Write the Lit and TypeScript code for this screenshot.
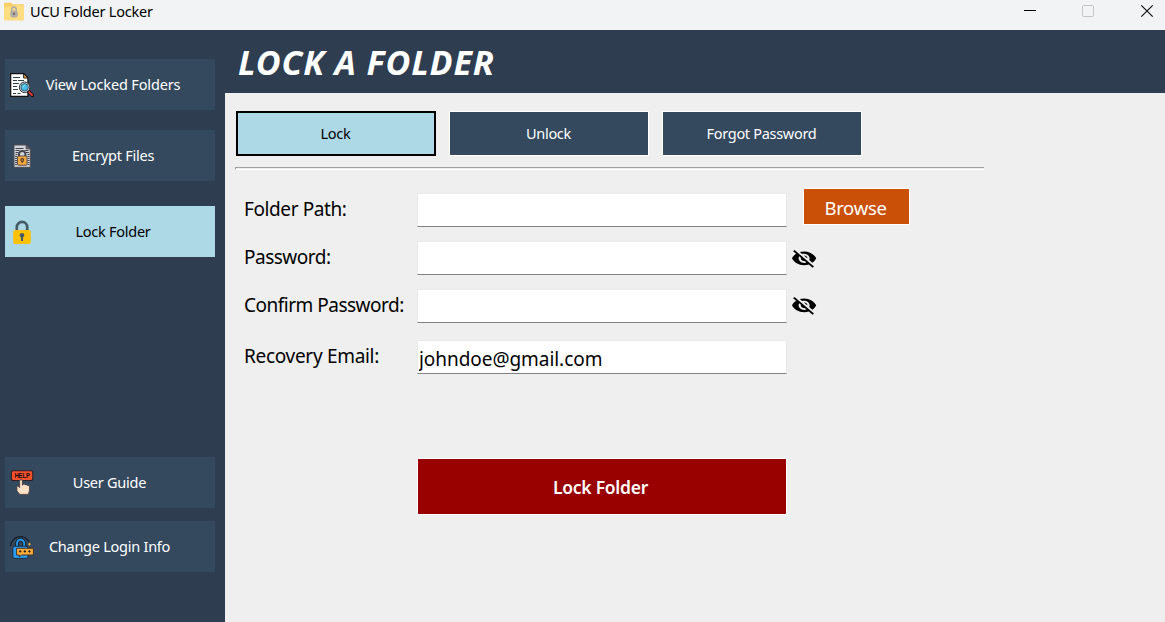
import { LitElement, html, css, svg } from "lit";
import { customElement } from "lit/decorators.js";
import { classMap } from "lit/directives/class-map.js";

const wrap = (body: unknown, w = 24, h = 24) => html`<svg width=${w} height=${h} viewBox="0 0 ${w} ${h}" fill="none">${body}</svg>`;

const icons = {
  view: wrap(svg`
    <path d="M.7 .7h13.2l4 4V23.4H.7z" fill="#fff" stroke="#111" stroke-width="1.2"/>
    <path d="M13.6 .8v4.2h4.3z" fill="#f2a73b" stroke="#111" stroke-width=".9"/>
    <path d="M3 4.5h7M3 7.5h4M8 7.5h6M3 10.5h6M3 13.5h4M3 16.5h5M3 20.5h3M7.5 20.5h3" stroke="#333b42" stroke-width="1"/>
    <path d="M18.6 18.6l4 4" stroke="#111" stroke-width="3.6" stroke-linecap="round"/>
    <path d="M18.8 18.8l3.8 3.8" stroke="#e83c3c" stroke-width="2"/>
    <circle cx="14.6" cy="14.3" r="5.3" fill="#d5dde2" stroke="#222a30" stroke-width="1"/>
    <circle cx="14.6" cy="14.3" r="3.7" fill="#43bdec" stroke="#34434e" stroke-width=".8"/>
    <path d="M12.8 14l1.8-1.6" stroke="#c5efff" stroke-width="1"/>`),
  encrypt: wrap(svg`
    <path d="M4 1h12l4.3 4v18.3H4z" fill="#d3d5dc" stroke="#514c51" stroke-width="1"/>
    <path d="M16 1l4.3 4H16z" fill="#686970" stroke="#514c51" stroke-width=".7"/>
    <path d="M5.5 4.5h8M5.5 6.5h4M14.5 6.5h4M5.5 8.5h3M16 8.5h3M5.5 10.5h2M17.5 10.5h2M5 12.5h2M17.5 12.5h2M5 14.5h2M17.5 14.5h2M5 16.5h2M17.5 16.5h2M5 18.5h2M17.5 18.5h2M5 20.5h2M17.5 20.5h2" stroke="#44464c"/>
    <path d="M9 12.3V10.1a3.2 3.2 0 016.4 0v2.2" stroke="#44444b" stroke-width="2"/>
    <rect x="7.5" y="12" width="9.5" height="9.2" rx=".8" fill="#f4a83d" stroke="#4c443f" stroke-width=".9"/>
    <circle cx="12.2" cy="16" r="1.4" stroke="#4c3a28" stroke-width="1.1"/>
    <path d="M12.2 17v2" stroke="#4c3a28" stroke-width="1.1"/>`),
  lock: wrap(svg`
    <path d="M6.8 11.5V7.1a5.2 5.2 0 0110.4 0v4.4" stroke="#455b66" stroke-width="2.7"/>
    <rect x="3.2" y="10" width="17.6" height="14" rx="1.9" fill="#ffc107"/>
    <circle cx="12" cy="15.2" r="2.3" fill="#455b66"/>
    <path d="M11 16h2v5h-2z" fill="#455b66"/>`),
  help: wrap(svg`
    <rect x="1.4" y=".7" width="21.4" height="9.8" rx="2" fill="#f5512d" stroke="#301f25" stroke-width="1.1"/>
    <path d="M9.6 11c0-1.9 2.8-1.9 2.8 0v4.2l.7-.6c1-.9 2-.4 2.2.4.9-.7 1.9-.3 2.2.6 1.1-.4 2 .3 2 1.5v3.4l-1.1 3.9H9.8l-2.9-3.5v-3.8c0-1.2 1.3-1.6 1.8-.6l.9 1.2z" fill="#fce0c6" stroke="#3c3438" stroke-width=".8"/>
    <text class="help-word" x="12.1" y="8.3" text-anchor="middle" textLength="15.4" lengthAdjust="spacingAndGlyphs" fill="#190b0d">HELP</text>`, 24, 25),
  login: wrap(svg`
    <path d="M.7 11A9.8 9.8 0 0119.2 6.8" stroke="#15191f" stroke-width="1.1"/>
    <path d="M7 12V8.3a3.6 3.6 0 017.2 0V12" stroke="#12222f" stroke-width="3.8"/>
    <path d="M7 12V8.3a3.6 3.6 0 017.2 0V12" stroke="#2398e9" stroke-width="1.9"/>
    <rect x="2.8" y="11.2" width="15.3" height="12.2" rx="2.2" fill="#2a9df4" stroke="#182530" stroke-width=".9"/>
    <path d="M6.6 13.3h16.8v6.7H11.4l-2 2v-2H6.6z" fill="#f9ab3c" stroke="#3a2b1c" stroke-width=".9"/>
    <path d="M19.5 7.8v2.8M18.1 9.2h2.8" stroke="#f5a33a" stroke-width="1"/>
    <path d="M9 16.4h2.4M13.6 16.4H16M18.2 16.4h2.4M10.2 15.2v2.4M14.8 15.2v2.4M19.4 15.2v2.4" stroke="#2b211a" stroke-width="1"/>`),
  eye: wrap(svg`<path transform="translate(-.1 2.2) scale(1.1 .93)" fill="#000" d="M12 7c2.76 0 5 2.24 5 5 0 .65-.13 1.26-.36 1.83l2.92 2.92c1.51-1.26 2.7-2.89 3.43-4.75-1.73-4.39-6-7.5-11-7.5-1.4 0-2.74.25-3.98.7l2.16 2.16C10.74 7.13 11.35 7 12 7zM2 4.27l2.28 2.28.46.46C3.08 8.3 1.78 10.02 1 12c1.73 4.39 6 7.5 11 7.5 1.55 0 3.03-.3 4.38-.84l.42.42L19.73 22 21 20.73 3.27 3 2 4.27zM7.53 9.8l1.55 1.55c-.05.21-.08.43-.08.65 0 1.66 1.34 3 3 3 .22 0 .44-.03.65-.08l1.55 1.55c-.67.33-1.41.53-2.2.53-2.76 0-5-2.24-5-5 0-.79.2-1.53.53-2.2zm4.31-.78l3.15 3.15.02-.16c0-1.66-1.34-3-3-3l-.17.01z"/>`, 26, 26),
};

@customElement("app-root")
export class AppRoot extends LitElement {
  static styles = css`
    :host { display: flex; flex-direction: column; width: 1165px; height: 622px; overflow: hidden; background: #efefef; color: #000; font-family: "Noto Sans", "Open Sans", sans-serif; font-size: 14.5px; }
    * { box-sizing: border-box; }
    svg { display: block; flex: none; }
    button { font: inherit; border: 0; padding: 0; margin: 0; color: #fff; }
    .titlebar { display: flex; align-items: center; height: 30px; flex: none; background: #f1f3f5; padding-left: 4px; }
    .app-name { margin: -8px 0 0 6px; letter-spacing: -.2px; font-size: 14.5px; }
    .app-icon { margin-top: -7px; }
    .controls { display: flex; margin-left: auto; }
    .body { display: flex; flex: 1; min-height: 0; }
    .sidebar { width: 225px; flex: none; background: #2e3e50; padding: 29px 10px 50px 5px; display: flex; flex-direction: column; }
    .nav { display: flex; align-items: center; height: 51px; flex: none; background: #34495e; padding-left: 5px; margin-bottom: 20px; letter-spacing: -.25px; }
    .nav span { flex: 1; text-align: center; padding: 0 26px 2px 3px; white-space: nowrap; }
    .nav.wide { letter-spacing: -.15px; }
    .nav.gap { margin-bottom: 25px; }
    .nav.low { margin-top: auto; margin-bottom: 13px; }
    .nav.last { margin-bottom: 0; }
    .nav.low span, .nav.last span { padding-right: 33px; }
    .nav.active { background: #add8e6; color: #000; }
    .help-word { font: 700 7.4px "Liberation Sans", sans-serif; }
    .main { flex: 1; display: flex; flex-direction: column; }
    .header { height: 63px; flex: none; background: #2e3e50; color: #fff; display: flex; align-items: center; padding: 1px 0 0 13px; }
    h1 { margin: 0; font-size: 34px; line-height: 1; font-weight: 700; font-style: italic; white-space: nowrap; letter-spacing: .85px; }
    .tabs { display: flex; gap: 13px; padding: 18px 0 0 11px; }
    .tab { width: 200px; height: 45px; background: #34495e; border: 1px solid #fff; letter-spacing: -.3px; padding: 0 1px 2px 0; }
    .tab.active { background: #add8e6; border: 2px solid #000; color: #000; }
    .rule { width: 749px; height: 3px; flex: none; margin: 11px 0 0 10px; border-top: 1px solid #a0a0a0; border-bottom: 1px solid #fff; border-left: 1px solid #a0a0a0; }
    .form { display: grid; grid-template-columns: 173px 370px auto; grid-template-rows: 48px 48px 51px 50px; padding: 18px 0 0 19px; }
    .label { font-size: 19px; letter-spacing: -.4px; line-height: 24px; padding-top: 9px; white-space: nowrap; }
    .label.snug { letter-spacing: -.5px; }
    .label.loose { letter-spacing: -.3px; }
    .field { width: 370px; height: 34px; margin-top: 5px; border: 1px solid #e9e9e9; border-bottom-color: #828282; background: #fff; border-radius: 0; font: inherit; font-size: 19px; letter-spacing: -.05px; padding: 3px 0 0 1px; outline: 0; color: #000; }
    .eye { padding: 9px 0 0 4px; }
    .eye.up { padding-top: 8px; }
    .browse { width: 107px; height: 37px; margin-left: 16px; background: #ca5008; border: 1px solid #fff; font-size: 18.5px; letter-spacing: -.3px; padding: 1px 2px 0 0; }
    .submit { width: 370px; height: 57px; flex: none; margin: 73px 0 0 192px; background: #900; border: 1px solid #fff; font-size: 17.5px; font-weight: 600; letter-spacing: -.25px; padding: 1px 3px 0 0; }
  `;

  private nav(icon: unknown, label: string, extra = "") {
    return html`<button class=${"nav " + extra}>${icon}<span>${label}</span></button>`;
  }

  private tab(label: string, active = false) {
    return html`<button class=${classMap({ tab: true, active })}>${label}</button>`;
  }

  private row(label: string, value = "", side: unknown = html`<i></i>`, extra = "") {
    return html`<label class=${"label " + extra}>${label}</label><input class="field" .value=${value} />${side}`;
  }

  render() {
    return html`
      <div class="titlebar">
        <svg class="app-icon" width="20" height="19" viewBox="0 0 20 19">
          <path d="M0 1.5Q0 .7 1 .7h6l2 1.6h10q1 0 1 1V17q0 1.3-1 1.3H1q-1 0-1-1z" fill="#f7cd68"/>
          <path d="M0 4.8h7.4l2-1.5H20V17q0 1.3-1 1.3H1q-1 0-1-1z" fill="#ffdd80"/>
          <path d="M7.8 9V7.2a2.2 2.2 0 014.4 0V9" fill="none" stroke="#a9a9a9" stroke-width="1.5"/>
          <rect x="6.2" y="8.5" width="7.6" height="7" rx="2.8" fill="#b1aeaa"/>
          <circle cx="10" cy="11.8" r="1.2" fill="#786f62"/>
        </svg>
        <span class="app-name">UCU Folder Locker</span>
        <svg class="controls" width="141" height="30" viewBox="0 0 141 30" fill="none">
          <path d="M0 10.5h12" stroke="#000"/>
          <rect x="58.5" y="5.5" width="11" height="11" rx="1" stroke="#c1c3c5"/>
          <path d="M117.3 5.3l11.4 11.4M128.7 5.3l-11.4 11.4" stroke="#111" stroke-width="1.2"/>
        </svg>
      </div>
      <div class="body">
        <div class="sidebar">
          ${this.nav(icons.view, "View Locked Folders", "wide")}
          ${this.nav(icons.encrypt, "Encrypt Files", "gap")}
          ${this.nav(icons.lock, "Lock Folder", "active")}
          ${this.nav(icons.help, "User Guide", "low")}
          ${this.nav(icons.login, "Change Login Info", "last")}
        </div>
        <div class="main">
          <div class="header"><h1>LOCK A FOLDER</h1></div>
          <div class="tabs">${this.tab("Lock", true)}${this.tab("Unlock")}${this.tab("Forgot Password")}</div>
          <div class="rule"></div>
          <div class="form">
            ${this.row("Folder Path:", "", html`<button class="browse">Browse</button>`)}
            ${this.row("Password:", "", html`<div class="eye">${icons.eye}</div>`, "snug")}
            ${this.row("Confirm Password:", "", html`<div class="eye up">${icons.eye}</div>`, "snug")}
            ${this.row("Recovery Email:", "johndoe@gmail.com", undefined, "loose")}
          </div>
          <button class="submit">Lock Folder</button>
        </div>
      </div>
    `;
  }
}
